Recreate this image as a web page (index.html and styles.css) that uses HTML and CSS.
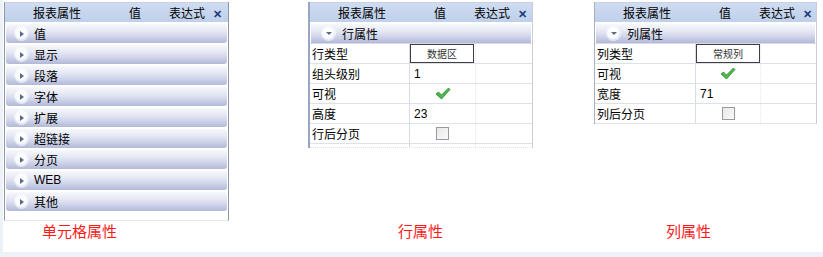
FILE: index.html
```html
<!DOCTYPE html>
<html>
<head>
<meta charset="utf-8">
<link rel="stylesheet" href="styles.css">
</head>
<body>
<div class="page">
  <div class="col col1">
    <div class="panel-area">
      <div class="panel p1">
        <div class="hdr">
          <span class="h-name">报表属性</span><span class="h-val">值</span><span class="h-exp">表达式</span><span class="h-x">✕</span>
        </div>
        <div class="groups">
          <div class="grp"><span class="ico right"></span><span>值</span></div>
          <div class="grp"><span class="ico right"></span><span>显示</span></div>
          <div class="grp"><span class="ico right"></span><span>段落</span></div>
          <div class="grp"><span class="ico right"></span><span>字体</span></div>
          <div class="grp"><span class="ico right"></span><span>扩展</span></div>
          <div class="grp"><span class="ico right"></span><span>超链接</span></div>
          <div class="grp"><span class="ico right"></span><span>分页</span></div>
          <div class="grp"><span class="ico right"></span><span class="latin">WEB</span></div>
          <div class="grp"><span class="ico right"></span><span>其他</span></div>
        </div>
      </div>
    </div>
    <div class="cap cap1">单元格属性</div>
  </div>

  <div class="col col2">
    <div class="panel-area">
      <div class="panel p2">
        <div class="hdr">
          <span class="h-name">报表属性</span><span class="h-val">值</span><span class="h-exp">表达式</span><span class="h-x">✕</span>
        </div>
        <div class="grp open"><span class="ico down"></span><span>行属性</span></div>
        <div class="rows">
          <div class="row"><span class="k">行类型</span><span class="v"><span class="btn">数据区</span></span><span class="e"></span></div>
          <div class="row"><span class="k">组头级别</span><span class="v num">1</span><span class="e"></span></div>
          <div class="row"><span class="k">可视</span><span class="v ctr"><svg class="chk" width="16" height="13" viewBox="0 0 16 13"><path d="M1 7 L3.5 5 L6.5 8 L13.5 1 L15 2.5 L6.5 12 Z" fill="#4cb84c" stroke="#2e8a2e" stroke-width="0.8"/></svg></span><span class="e"></span></div>
          <div class="row"><span class="k">高度</span><span class="v num">23</span><span class="e"></span></div>
          <div class="row"><span class="k">行后分页</span><span class="v ctr"><span class="box"></span></span><span class="e"></span></div>
          <div class="row tail"><span class="k"></span><span class="v"></span><span class="e"></span></div>
        </div>
      </div>
    </div>
    <div class="cap cap2">行属性</div>
  </div>

  <div class="col col3">
    <div class="panel-area">
      <div class="panel p3">
        <div class="hdr">
          <span class="h-name">报表属性</span><span class="h-val">值</span><span class="h-exp">表达式</span><span class="h-x">✕</span>
        </div>
        <div class="grp open"><span class="ico down"></span><span>列属性</span></div>
        <div class="rows">
          <div class="row"><span class="k">列类型</span><span class="v"><span class="btn">常规列</span></span><span class="e"></span></div>
          <div class="row"><span class="k">可视</span><span class="v ctr"><svg class="chk" width="16" height="13" viewBox="0 0 16 13"><path d="M1 7 L3.5 5 L6.5 8 L13.5 1 L15 2.5 L6.5 12 Z" fill="#4cb84c" stroke="#2e8a2e" stroke-width="0.8"/></svg></span><span class="e"></span></div>
          <div class="row"><span class="k">宽度</span><span class="v num">71</span><span class="e"></span></div>
          <div class="row"><span class="k">列后分页</span><span class="v ctr"><span class="box"></span></span><span class="e"></span></div>
        </div>
      </div>
    </div>
    <div class="cap cap3">列属性</div>
  </div>
</div>
</body>
</html>
```
FILE: styles.css
```css
* { box-sizing: border-box; }
html, body { margin: 0; padding: 0; }
body {
  background: #edf1f8;
  font-family: "Noto Sans CJK SC", "Liberation Sans", sans-serif;
  font-size: 12px;
  color: #000;
  width: 823px;
  height: 257px;
  overflow: hidden;
}
.page {
  margin-left: 3px;
  height: 252px;
  background: #fff;
  display: flex;
  align-items: flex-start;
}
.col { display: flex; flex-direction: column; }
.col1 { margin-left: 1px; width: 225px; }
.col2 { margin-left: 79px; width: 225px; }
.col3 { margin-left: 61px; width: 223px; }
.panel-area { height: 221px; padding-top: 2px; }

.panel {
  border-left: 1px solid #8e96a8;
  border-right: 1px solid #8e96a8;
  background: #fff;
}
.p1 { height: 219px; border-bottom: 1px solid #e4e8f0; }
.p2 { border-left: 2px solid #98a6c4; border-right: 1px solid #c9cdd6; }
.p3 { border-left: 1px solid #a8b0c4; border-right: 1px solid #c9cdd6; }

.hdr {
  height: 20px;
  background: linear-gradient(#cfdcf1, #bfd0eb);
  border-top: 1px solid #c8d2e4;
  display: flex;
  align-items: center;
  line-height: 18px;
  font-size: 12px;
}
.h-name { width: 102px; text-align: center; padding-left: 2px; }
.h-val { width: 56px; text-align: center; }
.h-exp { padding-left: 6px; }
.h-x { margin-left: 8px; color: #1d3c7c; font-size: 11px; font-weight: bold; }

.groups { padding-top: 2px; display: flex; flex-direction: column; gap: 2px; }
.grp {
  height: 19px;
  margin: 0 1px;
  border-radius: 3px;
  background: linear-gradient(#f7f8fc 0%, #e6e9f4 35%, #d0d5ea 65%, #b2b9d8 100%);
  display: flex;
  align-items: center;
  font-size: 12px;
  line-height: 19px;
}
.grp.open { margin: 2px 1px 0; height: 19px; border-radius: 0; }
.grp .latin { font-family: "Liberation Sans", sans-serif; font-size: 12px; }
.ico {
  width: 13px; height: 13px;
  border-radius: 50%;
  margin-left: 9px;
  margin-right: 6px;
  background: radial-gradient(circle at 45% 40%, #ffffff 0%, #fbfcfe 50%, #e2e6f1 80%, #b8bfd6 100%);
  box-shadow: 0 0 0 1px rgba(255,255,255,0.6);
  position: relative;
  flex: none;
}
.ico.right::after {
  content: "";
  position: absolute;
  left: 5px; top: 3.5px;
  border-left: 4px solid #5a6a8c;
  border-top: 3px solid transparent;
  border-bottom: 3px solid transparent;
}
.ico.down { margin-left: 11px; margin-right: 7px; }
.ico.down::after {
  content: "";
  position: absolute;
  left: 3.5px; top: 5px;
  border-top: 3px solid #5a6a8c;
  border-left: 3px solid transparent;
  border-right: 3px solid transparent;
}

.rows { border-top: 1px solid #d6dbe6; }
.row {
  display: flex;
  height: 20px;
  border-bottom: 1px solid #dde1ea;
}
.row .k {
  width: 100px;
  padding-left: 2px;
  line-height: 19px;
  border-right: 1px solid #d6dbe6;
  font-size: 12px;
}
.row .v {
  width: 66px;
  display: flex;
  align-items: center;
  border-right: 1px dotted #e4e7ee;
}
.row .e { flex: 1; }
.row.tail { height: 4px; border-bottom: 1px dotted #dfe3ea; }
.p3 .row .k { width: 101px; }
.p3 .row .v { width: 65px; }
.num { padding-left: 4px; font-family: "Liberation Sans", sans-serif; font-size: 12px; }
.ctr { justify-content: center; }
.btn {
  width: 64px;
  height: 19px;
  margin-top: -1px;
  border: 1px solid #3e3e3e;
  background: #fff;
  font-size: 10px;
  color: #333;
  text-align: center;
  line-height: 17px;
}
.box {
  width: 13px; height: 13px;
  border: 1px solid #9a9a9a;
  background: linear-gradient(135deg, #e8e8e8, #fafafa);
}

.cap {
  color: #ff1a1a;
  font-size: 15px;
  line-height: 20px;
}
.cap1 { margin-left: 38px; }
.cap2 { margin-left: 90px; }
.cap3 { margin-left: 72px; }
```
